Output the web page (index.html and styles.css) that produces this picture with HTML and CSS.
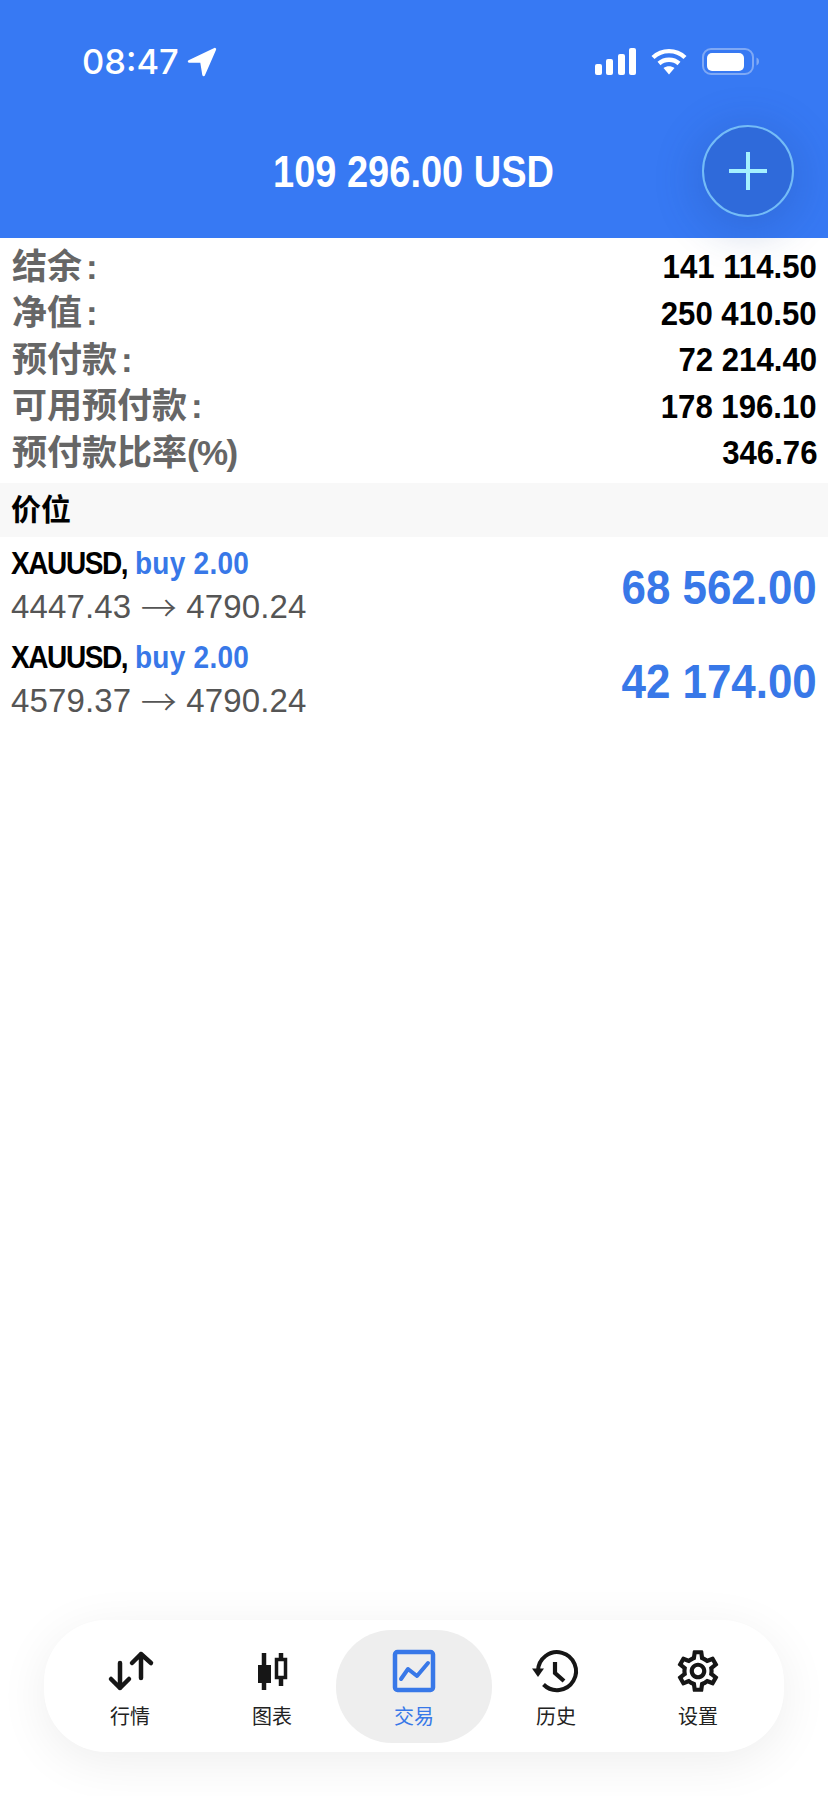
FILE: index.html
```html
<!DOCTYPE html>
<html lang="zh">
<head>
    <meta charset="UTF-8">
    <meta name="viewport" content="width=device-width, initial-scale=1.0">
    <title>交易</title>
    <link rel="stylesheet" href="styles.css">
</head>
<body>
<div class="page">

    <!-- Blue header with status bar -->
    <header class="top">
        <div class="status">
            <div class="status-left">
                <span class="clock">08:47</span>
                <svg class="loc" width="30" height="30" viewBox="0 0 28 28"><path d="M26 2 2 13.5h11.5L15.5 26Z" fill="#fff" stroke="#fff" stroke-width="2.5" stroke-linejoin="round"/></svg>
            </div>
            <div class="status-right">
                <svg width="41" height="27" viewBox="0 0 41 27" fill="#fff">
                    <rect x="0" y="16" width="7" height="11" rx="2"/>
                    <rect x="11" y="11" width="7" height="16" rx="2"/>
                    <rect x="23" y="6" width="7" height="21" rx="2"/>
                    <rect x="34" y="0" width="7" height="27" rx="2"/>
                </svg>
                <svg width="36" height="27" viewBox="0 0 36 27" fill="none" stroke="#fff" stroke-width="4.4">
                    <path d="M2 9.5C11 1 25 1 34 9.5"/>
                    <path d="M8 15.5C13.500 10.500 22.500 10.500 28 15.500"/>
                    <path d="M12.500 20 18 26.500 23.500 20C20 17.500 16 17.500 12.500 20Z" fill="#fff" stroke="none"/>
                </svg>
                <svg width="57" height="27" viewBox="0 0 57 27">
                    <rect x="1" y="1" width="50" height="25" rx="8" fill="none" stroke="#7fa9f5" stroke-width="2"/>
                    <rect x="5" y="5" width="37" height="18" rx="5" fill="#fff"/>
                    <path d="M54.500 9.500c1.800.8 2.500 2.200 2.500 4s-.7 3.200-2.500 4z" fill="#7fa9f5"/>
                </svg>
            </div>
        </div>
        <div class="title-bar">
            <h1 class="title">109 296.00 USD</h1>
            <button class="add" type="button">
                <svg width="38" height="38" viewBox="0 0 38 38"><path d="M0 19H38M19 0V38" stroke="#a4f1ff" stroke-width="4"/></svg>
            </button>
        </div>
    </header>

    <!-- Account summary -->
    <section class="summary">
        <div class="row"><span class="key">结余<span class="colon">:</span></span><span class="val">141 114.50</span></div>
        <div class="row"><span class="key">净值<span class="colon">:</span></span><span class="val">250 410.50</span></div>
        <div class="row"><span class="key">预付款<span class="colon">:</span></span><span class="val">72 214.40</span></div>
        <div class="row"><span class="key">可用预付款<span class="colon">:</span></span><span class="val">178 196.10</span></div>
        <div class="row"><span class="key">预付款比率<span class="pct">(%)</span></span><span class="val">346.76</span></div>
    </section>

    <div class="section-head">价位</div>

    <!-- Open positions -->
    <section class="positions">
        <div class="position">
            <div class="pos-info">
                <div class="pos-name"><span class="sym">XAUUSD,</span> <span class="blue">buy 2.00</span></div>
                <div class="pos-price">4447.43 <span class="arrow">→</span> 4790.24</div>
            </div>
            <div class="profit">68 562.00</div>
        </div>
        <div class="position">
            <div class="pos-info">
                <div class="pos-name"><span class="sym">XAUUSD,</span> <span class="blue">buy 2.00</span></div>
                <div class="pos-price">4579.37 <span class="arrow">→</span> 4790.24</div>
            </div>
            <div class="profit">42 174.00</div>
        </div>
    </section>

    <!-- Bottom tab bar -->
    <nav class="tabs">
        <a class="tab">
            <svg width="50" height="50" viewBox="0 0 50 50" fill="none" stroke="#161616" stroke-width="4.500" stroke-linecap="round" stroke-linejoin="round">
                <path d="M15 17V42M6 33l9 9 9-9"/>
                <path d="M36 8V32M27 17l9-9 10 9"/>
            </svg>
            <span>行情</span>
        </a>
        <a class="tab">
            <svg width="50" height="50" viewBox="0 0 50 50" fill="none" stroke="#161616">
                <path d="M17 7V44" stroke-width="4.500"/>
                <rect x="11" y="19" width="13" height="18" fill="#161616" stroke="none"/>
                <path d="M34 7V40" stroke-width="4.500"/>
                <rect x="29.500" y="13.500" width="9" height="18" fill="#fff" stroke-width="3.500"/>
            </svg>
            <span>图表</span>
        </a>
        <a class="tab active">
            <svg width="50" height="50" viewBox="0 0 50 50" fill="none" stroke="#3878e8" stroke-linejoin="round" stroke-linecap="round">
                <rect x="6" y="6" width="38" height="38" rx="2.500" stroke-width="4.500"/>
                <path d="M12 33 19 23 28 30 39 17" stroke-width="4"/>
            </svg>
            <span>交易</span>
        </a>
        <a class="tab">
            <svg width="50" height="50" viewBox="0 0 50 50" fill="none" stroke="#161616" stroke-width="4">
                <path d="M7 25A19 19 0 1 1 12.500 38.500"/>
                <path d="M1 22.500H13L7 31Z" fill="#161616" stroke="none"/>
                <path d="M24 16V27L33 35" stroke-width="4.200"/>
            </svg>
            <span>历史</span>
        </a>
        <a class="tab">
            <svg width="50" height="50" viewBox="0 0 24 24" fill="#161616">
                <path d="M19.43 12.98c.04-.32.07-.64.07-.98 0-.34-.03-.66-.07-.98l2.11-1.65c.19-.15.24-.42.12-.64l-2-3.46c-.09-.16-.26-.25-.44-.25-.06 0-.12.01-.17.03l-2.49 1c-.52-.4-1.08-.73-1.69-.98l-.38-2.65C14.46 2.18 14.25 2 14 2h-4c-.25 0-.46.18-.49.42l-.38 2.65c-.61.25-1.17.59-1.69.98l-2.49-1c-.06-.02-.12-.03-.18-.03-.17 0-.34.09-.43.25l-2 3.46c-.13.22-.07.49.12.64l2.11 1.65c-.04.32-.07.65-.07.98 0 .33.03.66.07.98l-2.11 1.65c-.19.15-.24.42-.12.64l2 3.46c.09.16.26.25.44.25.06 0 .12-.01.17-.03l2.49-1c.52.4 1.08.73 1.69.98l.38 2.65c.03.24.24.42.49.42h4c.25 0 .46-.18.49-.42l.38-2.65c.61-.25 1.17-.59 1.69-.98l2.49 1c.06.02.12.03.18.03.17 0 .34-.09.43-.25l2-3.46c.12-.22.07-.49-.12-.64l-2.11-1.65zm-1.98-1.71c.04.31.05.52.05.73 0 .21-.02.43-.05.73l-.14 1.13.89.7 1.08.84-.7 1.21-1.27-.51-1.04-.42-.9.68c-.43.32-.84.56-1.25.73l-1.06.43-.16 1.13-.2 1.35h-1.4l-.19-1.35-.16-1.13-1.06-.43c-.43-.18-.83-.41-1.23-.71l-.91-.7-1.06.43-1.27.51-.7-1.21 1.08-.84.89-.7-.14-1.13c-.03-.31-.05-.54-.05-.74s.02-.43.05-.73l.14-1.13-.89-.7-1.08-.84.7-1.21 1.27.51 1.04.42.9-.68c.43-.32.84-.56 1.25-.73l1.06-.43.16-1.13.2-1.35h1.39l.19 1.35.16 1.13 1.06.43c.43.18.83.41 1.23.71l.91.7 1.06-.43 1.27-.51.7 1.21-1.07.85-.89.7.14 1.13zM12 8c-2.21 0-4 1.79-4 4s1.79 4 4 4 4-1.79 4-4-1.79-4-4-4zm0 6c-1.1 0-2-.9-2-2s.9-2 2-2 2 .9 2 2-.9 2-2 2z"/>
            </svg>
            <span>设置</span>
        </a>
    </nav>

</div>
</body>
</html>
```

FILE: styles.css
```css
* {
    box-sizing: border-box;
}
body {
    margin: 0;
    background-color: #fff;
    font-family: "Liberation Sans", "Noto Sans CJK SC", sans-serif;
}
.page {
    height: 1796px;
    display: flex;
    flex-direction: column;
    overflow: hidden;
}

/* header */
.top {
    height: 238px;
    background-color: #3779f3;
    color: #fff;
    padding: 48px 35px 0 0;
    position: relative;
}
.status {
    display: flex;
    justify-content: space-between;
    align-items: center;
    height: 27px;
    padding: 0 34px 0 82px;
}
.status-left {
    display: flex;
    align-items: center;
    gap: 8px;
}
.clock {
    font-family: Inter, sans-serif;
    font-size: 34.500px;
    font-weight: 500;
    line-height: 27px;
}
.status-right {
    display: flex;
    align-items: center;
    gap: 15px;
}
.title-bar {
    display: flex;
    justify-content: center;
    padding: 72px 0 0 35px;
}
.title {
    margin: 0;
    font-size: 44.500px;
    font-weight: 700;
    line-height: 50px;
    white-space: nowrap;
    transform: scaleX(0.854);
}
.add {
    position: absolute;
    left: 702px;
    top: 125px;
    width: 92px;
    height: 92px;
    padding: 0;
    display: flex;
    align-items: center;
    justify-content: center;
    border-radius: 50%;
    border: 2px solid #74bcf7;
    background-color: #2f6ada;
    box-shadow: 0 8px 40px 8px rgba(30, 70, 150, 0.22);
}

/* account rows */
.summary {
    padding: 6px 0;
}
.row {
    display: flex;
    justify-content: space-between;
    align-items: center;
    height: 46.500px;
    padding: 0 11px 0 12px;
}
.key {
    padding-bottom: 8px;
    color: #666;
    font-size: 35px;
    font-weight: 700;
}
.colon {
    margin-left: 4px;
}
.pct {
    letter-spacing: -1.600px;
}
.val {
    color: #000;
    font-size: 33.500px;
    font-weight: 700;
    transform: scaleX(0.93);
    transform-origin: right center;
}
.section-head {
    height: 54px;
    line-height: 54px;
    padding: 0 11px;
    background-color: #f8f8f8;
    color: #000;
    font-size: 30px;
    font-weight: 700;
}

/* positions */
.positions {
    flex: 1;
}
.position {
    display: flex;
    justify-content: space-between;
    align-items: center;
    height: 94.500px;
    padding: 2px 11px 0 11px;
}
.pos-name {
    color: #000;
    font-size: 32px;
    font-weight: 700;
    line-height: 44px;
    white-space: nowrap;
    transform: scaleX(0.875);
    transform-origin: left center;
}
.sym {
    letter-spacing: -1.600px;
}
.blue {
    color: #3878e8;
    letter-spacing: 0.300px;
}
.pos-price {
    color: #555;
    font-size: 33px;
    line-height: 44px;
    letter-spacing: 0.150px;
}
.arrow {
    font-family: "Noto Sans CJK SC", sans-serif;
    font-size: 36px;
    font-weight: 300;
    line-height: 30px;
    vertical-align: -4px;
}
.profit {
    margin-top: 4px;
    color: #3878e8;
    font-size: 48.500px;
    font-weight: 700;
    transform: scaleX(0.905);
    transform-origin: right center;
}

/* tab bar */
.tabs {
    display: grid;
    grid-template-columns: repeat(5, 142px);
    height: 132px;
    margin: 0 44px 44px;
    padding: 10px 15px 9px;
    border-radius: 62px;
    background-color: #fff;
    box-shadow: 0 10px 50px rgba(0, 0, 0, 0.07);
}
.tab {
    display: flex;
    flex-direction: column;
    align-items: center;
    gap: 6px;
    padding-top: 16px;
    border-radius: 56px;
    color: #222;
    font-size: 20px;
    line-height: 30px;
}
.tab.active {
    margin: 0 -7px;
    background-color: #eee;
    color: #3878e8;
}
```
